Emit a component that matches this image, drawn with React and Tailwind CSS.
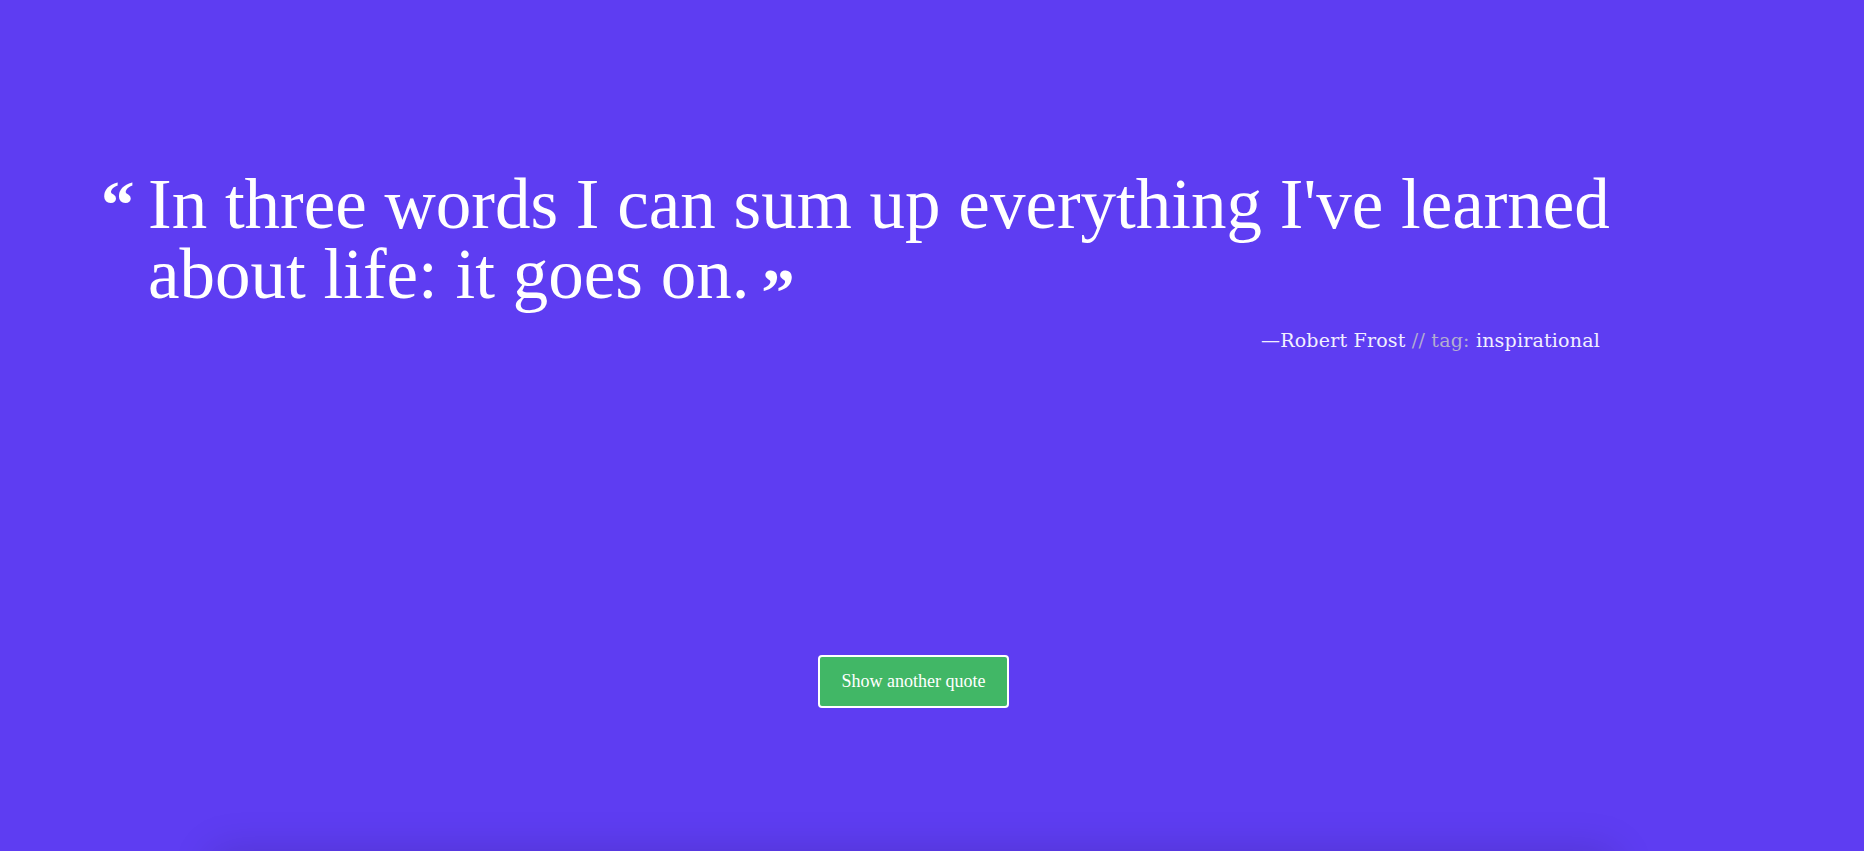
import { useState } from 'react'

const quote = {
  text: "In three words I can sum up everything I've learned about life: it goes on.",
  author: 'Robert Frost',
  tag: 'inspirational',
}

export default function App() {
  const [q] = useState(quote)

  return (
    <div className="min-h-screen bg-[#5e3df2] overflow-hidden">
      <div className="w-[1827px] h-[851px] flex flex-col">
        {/* quote */}
        <div className="pt-[169px] pl-[101px] flex items-baseline font-['Liberation_Serif',serif] text-white">
          <span className="w-[47px] shrink-0 text-[67px] leading-[70px] font-bold">“</span>
          <p className="w-[1480px] text-[71px] leading-[70px]">
            {q.text}{' '}
            <span className="relative top-[17px] -ml-[6px] text-[67px] font-bold">”</span>
          </p>
        </div>

        <div className="mt-[18px] pr-[227px] text-right font-['DejaVu_Serif',serif] text-[19px] leading-[25px] tracking-[0.2px] text-[#f1efff]">
          —{q.author} <span className="text-[#b3aed0]">// tag:</span> {q.tag}
        </div>

        <div className="mt-[302px] flex justify-center">
          <button className="w-[191px] h-[53px] bg-[#41b766] border-2 border-white rounded-[4px] text-white font-['Liberation_Serif',serif] text-[18px]">
            Show another quote
          </button>
        </div>
      </div>

      <div className="w-[1827px] flex justify-center">
        <div className="w-[1403px] h-[200px] bg-[#5e3df2] shadow-[0_0_40px_rgba(0,0,0,0.14)]" />
      </div>
    </div>
  )
}
